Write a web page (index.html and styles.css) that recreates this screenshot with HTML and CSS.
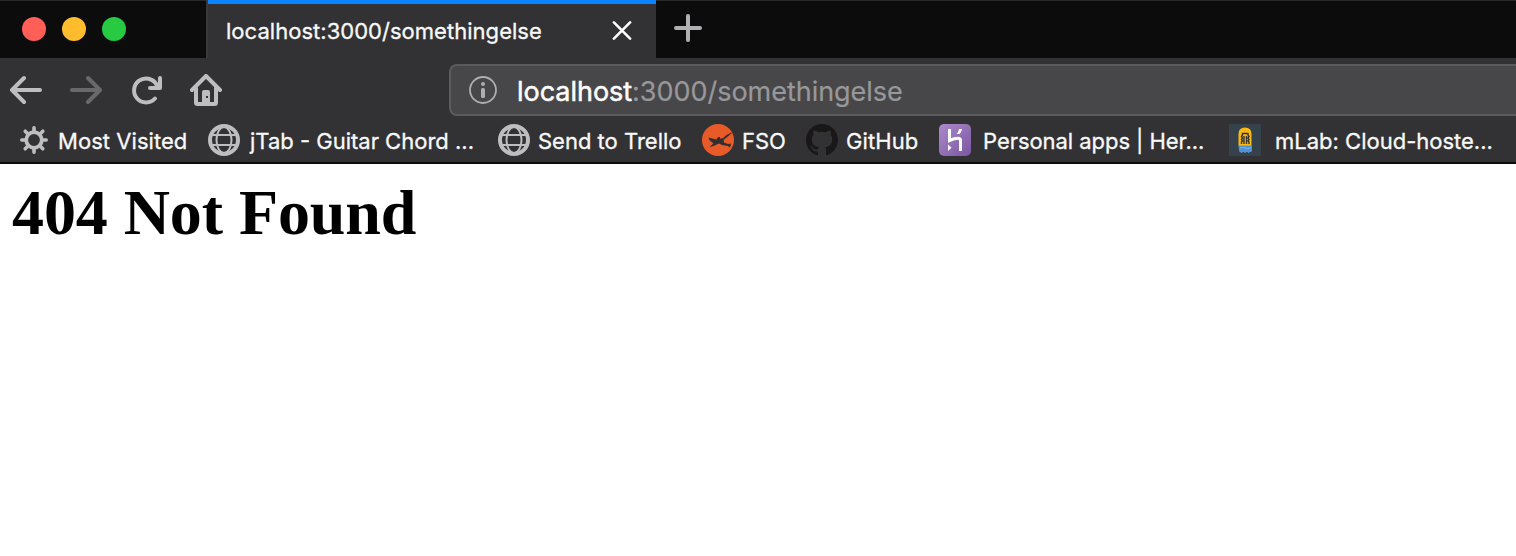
FILE: index.html
```html
<!DOCTYPE html>
<html lang="en">
<head>
<meta charset="utf-8">
<title>404 Not Found</title>
<link rel="stylesheet" href="styles.css">
</head>
<body>
<header class="browser">
  <div class="tabstrip">
    <div class="lights"><span class="light red"></span><span class="light yellow"></span><span class="light green"></span></div>
    <div class="tab">
      <span class="tab-title">localhost:3000/somethingelse</span>
      <svg class="close" width="20" height="20" viewBox="0 0 20 20"><path d="M1.900 1.400l16.200 16.200M18.100 1.400L1.900 17.600"/></svg>
    </div>
    <svg class="plus" width="28" height="28" viewBox="0 0 28 28"><path d="M14 2v24M2 14h24"/></svg>
  </div>
  <div class="toolbar">
    <svg class="tool" width="32" height="32" viewBox="0 0 32 32"><path d="M30 16H2.500M14 4L2 16l12 12"/></svg>
    <svg class="tool dim" width="32" height="32" viewBox="0 0 32 32"><path d="M2 16h27.500M18 4l12 12-12 12"/></svg>
    <svg class="tool" width="32" height="32" viewBox="0 0 32 32"><path d="M25 24.500A12 12 0 1 1 26.500 10.500"/><path d="M30 4v10H20"/><path class="solid" d="M26 8l4 2v4h-6z" stroke="none"/></svg>
    <svg class="tool" width="32" height="32" viewBox="0 0 32 32"><path d="M2 16L16 2l14 14M6 14v14.500q0 1.500 1.500 1.500h17q1.500 0 1.500-1.500V14"/><path class="solid" stroke="none" fill-rule="evenodd" d="M12 30V18q0-2 2-2h4q2 0 2 2v12zM16 22v2h2v-2z"/></svg>
    <div class="urlbar">
      <svg class="info" width="28" height="28" viewBox="0 0 28 28"><circle class="ring" cx="14" cy="14" r="13"/><circle cx="14" cy="8" r="2"/><rect x="12" y="12" width="4" height="10" rx="1.500"/></svg>
      <span class="url"><b class="host">localhost</b>:3000/somethingelse</span>
    </div>
  </div>
  <nav class="bookmarks">
    <a class="bm visited"><svg width="28" height="28" viewBox="-14 -14 28 28"><circle class="gear" r="7.800"/><path class="teeth" d="M0-9v-3.200M0 9v3.200M-9 0h-3.200M9 0h3.200M-6.500-6.500l-2.300-2.300M6.500 6.500l2.300 2.300M-6.500 6.500l-2.300 2.300M6.500-6.500l2.300-2.300"/></svg><span class="label">Most Visited</span></a>
    <a class="bm jtab"><svg width="32" height="32" viewBox="0 0 32 32"><g class="globe"><circle class="rim" cx="16" cy="16" r="14"/><ellipse cx="16" cy="16" rx="7.500" ry="13"/><path d="M4 11h24M4 21h24"/></g></svg><span class="label">jTab - Guitar Chord ...</span></a>
    <a class="bm trello"><svg width="32" height="32" viewBox="0 0 32 32"><g class="globe"><circle class="rim" cx="16" cy="16" r="14"/><ellipse cx="16" cy="16" rx="7.500" ry="13"/><path d="M4 11h24M4 21h24"/></g></svg><span class="label">Send to Trello</span></a>
    <a class="bm fso"><svg width="32" height="32" viewBox="0 0 32 32"><circle cx="16" cy="16" r="16" fill="#e85a28"/><path fill="#303032" d="M30.300 8.800L21.500 16l.5 2.500 4 1.500 2.500-.5.500 2-1.500 2-1.500-1.500-6-1-3-1.500-5.500 2.500-4 1 4-3.500-4-3.200-1-2.800 4.500 1.300 3.500.7 1.500-2.500h2l.5 2 3-1.200 3-2.800 4.500-2.200z"/></svg><span class="label">FSO</span></a>
    <a class="bm github"><svg width="32" height="32" viewBox="0 0 16 16"><path fill="#191717" d="M8 0C3.580 0 0 3.580 0 8c0 3.540 2.290 6.530 5.470 7.590.4.070.55-.17.55-.38 0-.19-.01-.82-.01-1.490-2.010.37-2.530-.49-2.690-.94-.09-.23-.48-.94-.82-1.130-.28-.15-.68-.52-.01-.53.63-.01 1.080.58 1.230.82.72 1.210 1.870.87 2.330.66.070-.52.28-.87.51-1.070-1.780-.2-3.640-.89-3.640-3.950 0-.87.31-1.590.82-2.150-.08-.2-.36-1.020.08-2.120 0 0 .67-.21 2.200.82a7.500 7.500 0 0 1 4 0c1.530-1.040 2.200-.82 2.200-.82.44 1.100.16 1.920.08 2.120.51.56.82 1.270.82 2.150 0 3.070-1.870 3.750-3.650 3.950.29.25.54.73.54 1.480 0 1.070-.01 1.930-.01 2.200 0 .21.15.46.55.38A8 8 0 0 0 16 8c0-4.420-3.580-8-8-8z"/></svg><span class="label">GitHub</span></a>
    <a class="bm heroku"><svg width="32" height="32" viewBox="0 0 32 32"><defs><linearGradient id="violet" x1="0" y1="0" x2="1" y2="1"><stop offset="0" stop-color="#ab8bcb"/><stop offset="1" stop-color="#7b56a0"/></linearGradient></defs><rect width="32" height="32" rx="5" fill="url(#violet)"/><path class="hk" d="M10.500 5v11.500q11-4.500 11 0V27"/><path fill="#fff" d="M9 20.500v6.500l3.500-3.200zM20 5h3q-.5 3-2.500 5h-3Q19.500 8 20 5z"/></svg><span class="label">Personal apps | Her...</span></a>
    <a class="bm mlab"><svg width="32" height="32" viewBox="0 0 32 32"><path fill="#35414b" d="M0 0h32v32H0z"/><path fill="#fcb813" d="M9.500 22V10q0-6.500 6.500-6.500t6.500 6.500v12z"/><path fill="#4f93d2" d="M9.500 21.500h13.500v5q0 1-1 1.500H11q-1-.5-1-1.500z"/><path class="wave" d="M11 24q2.500-1.500 5 0t6-.5"/><path class="hair" d="M12.500 20v-2l1-1-1-1.500 1-1.500-1-1.500 1-1.500v-1.500h5.500V11l1 1.500-1 1.500 1 1.500-1 1.500 1 1v2M15 20v-8M17.500 20v-8"/><path class="feet" d="M12.500 28v1M16 28v1M19.500 28v1"/></svg><span class="label">mLab: Cloud-hoste...</span></a>
  </nav>
</header>
<main class="page"><h1 class="heading">404 Not Found</h1></main>
</body>
</html>
```
FILE: styles.css
```css
* { box-sizing: border-box; }
body { margin: 0; height: 556px; overflow: hidden; background: #fff; font-family: Inter, "Liberation Sans", sans-serif; }
svg { display: block; flex: none; }
.browser { height: 164px; background: #323234; border-bottom: 2px solid #0c0c0d; }
.tabstrip { display: flex; height: 58px; background: #0c0c0d; border-top: 1px solid #29292a; }
.lights { display: flex; gap: 16px; width: 206px; padding: 16px 0 0 22px; }
.light { width: 24px; height: 24px; border-radius: 50%; }
.red { background: #ff5f57; }
.yellow { background: #ffbd2e; }
.green { background: #28ca41; }
.tab { display: flex; align-items: center; justify-content: space-between; width: 450px; height: 58px; margin-top: -1px; padding: 4px 24px 0 18px; background: #323234; border-left: 2px solid #3a3a3b; background-image: linear-gradient(#0a84ff, #0a84ff); background-size: 100% 4px; background-repeat: no-repeat; }
.tab-title { font-size: 22px; letter-spacing: 0.03px; color: #f9f9fa; white-space: nowrap; -webkit-text-stroke: 0.3px; }
.close { fill: none; stroke: #fff; stroke-width: 2.600; stroke-linecap: round; }
.plus { margin: 13px 0 0 18px; fill: none; stroke: #b1b1b3; stroke-width: 4; stroke-linecap: round; }
.toolbar { display: flex; align-items: flex-start; height: 60px; padding: 6px 0 0 10px; }
.tool { margin: 10px 28px 0 0; fill: none; stroke: #bebebf; stroke-width: 4; stroke-linecap: round; stroke-linejoin: round; }
.tool .solid { fill: #bebebf; }
.dim { stroke: #69696b; }
.urlbar { display: flex; align-items: center; flex: 1; height: 52px; margin-left: 199px; padding-left: 18px; gap: 20px; background: #474749; border: 2px solid #5b5b5d; border-right: 0; border-radius: 8px 0 0 8px; }
.info { fill: #aeaeaf; }
.ring { fill: none; stroke: #aeaeaf; stroke-width: 1.800; }
.url { padding-top: 2px; font-size: 27px; letter-spacing: -0.03px; color: #98989a; white-space: nowrap; -webkit-text-stroke: 0.2px; }
.host { font-weight: 400; color: #fff; -webkit-text-stroke: 0.5px; }
.bookmarks { display: flex; height: 44px; padding-left: 20px; }
.bm { display: flex; align-items: center; flex: none; font-size: 22px; color: #f9f9fa; white-space: nowrap; }
.label { padding-top: 2px; -webkit-text-stroke: 0.3px; }
.visited { width: 188px; gap: 10px; letter-spacing: 0.05px; }
.jtab { width: 290px; gap: 10px; }
.trello { width: 204px; gap: 8px; }
.fso { width: 104px; gap: 8px; }
.github { width: 133px; gap: 8px; letter-spacing: 0.1px; }
.heroku { width: 290px; gap: 12px; letter-spacing: -0.05px; }
.mlab { gap: 14px; }
.gear { fill: none; stroke: #bebebf; stroke-width: 3.800; }
.teeth { stroke: #bebebf; stroke-width: 3.600; stroke-linecap: round; }
.globe { fill: none; stroke: #bebebf; stroke-width: 2; }
.rim { stroke-width: 4; }
.hk { fill: none; stroke: #fff; stroke-width: 3; }
.hair { fill: none; stroke: #35352b; stroke-width: 1.400; }
.wave { fill: none; stroke: #7db4e4; stroke-width: 1; }
.feet { stroke: #4f93d2; stroke-width: 1.500; }
.page { padding: 12px 0 0 12px; }
.heading { margin: 0; font: bold 64px/74px "Liberation Serif", serif; letter-spacing: -0.08px; color: #000; }
```
